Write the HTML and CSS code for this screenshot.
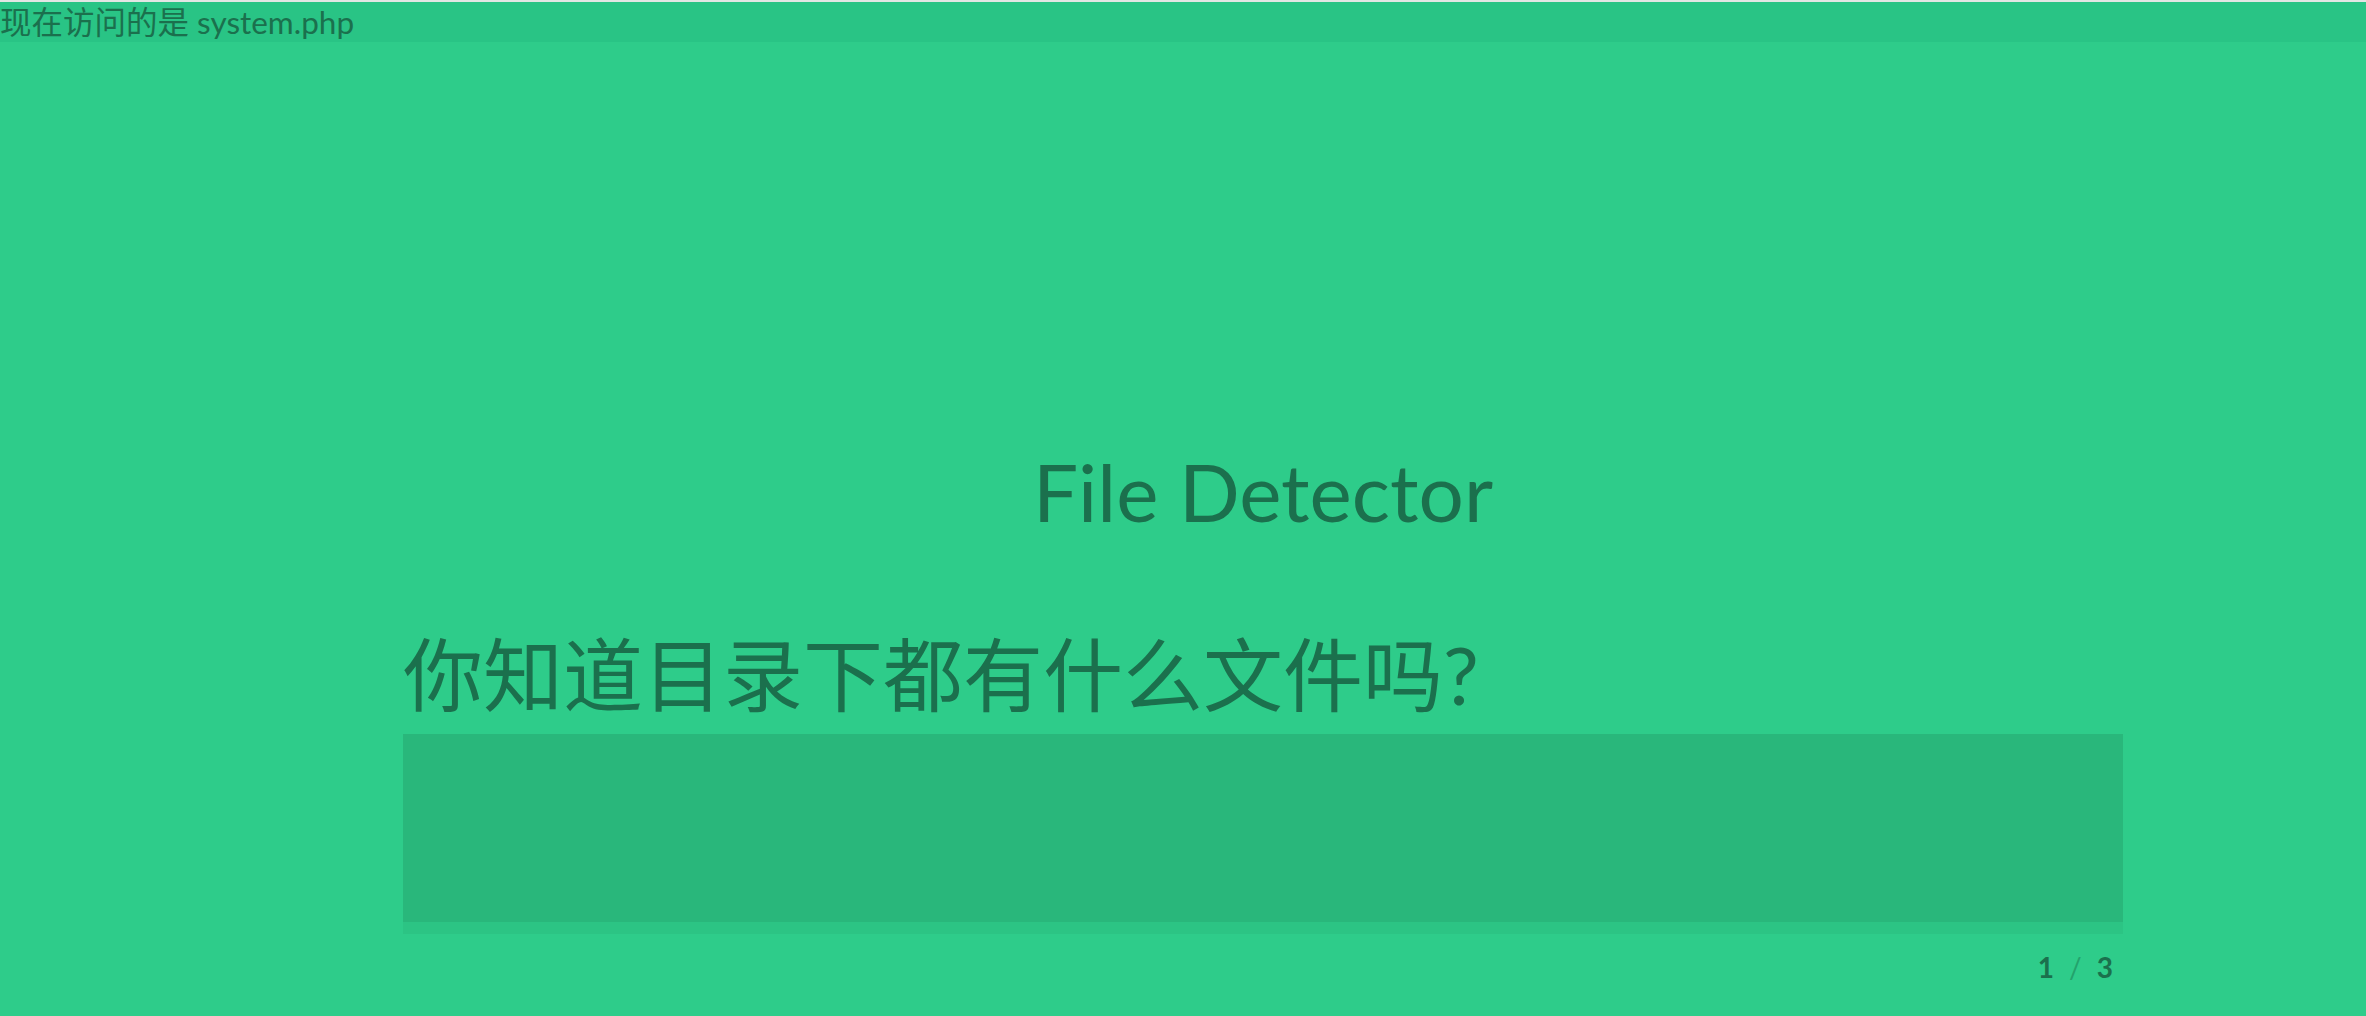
FILE: index.html
```html
<!DOCTYPE html>
<html lang="zh">
<head>
<meta charset="utf-8">
<title>File Detector</title>
<link rel="stylesheet" href="styles.css">
</head>
<body>
<div class="topbar">现在访问的是 system.php</div>
<main class="slide">
  <h1 class="title">File Detector</h1>
  <h2 class="question">你知道目录下都有什么文件吗?</h2>
  <div class="output">
    <div class="output-body"></div>
    <div class="output-strip"></div>
  </div>
  <div class="pager"><span class="num">1</span><span class="sep">/</span><span class="num">3</span></div>
</main>
</body>
</html>
```
FILE: styles.css
```css
html, body {
  margin: 0;
  padding: 0;
}
body {
  background: #2ecc8a;
  color: #1b704d;
  font-family: Lato, "Noto Sans CJK SC", sans-serif;
  height: 1016px;
  overflow: hidden;
}
.topbar {
  border-top: 2px solid #e2e6e4;
  background: #29c485;
  height: 40px;
  line-height: 40px;
  font-size: 31.5px;
  white-space: nowrap;
}
.slide {
  width: 1720px;
  margin-left: 403px;
  display: flex;
  flex-direction: column;
}
.title {
  margin: 401px 0 0 0;
  font-size: 80px;
  font-weight: 400;
  line-height: 96px;
  text-align: center;
}
.question {
  margin: 87px 0 0 0;
  font-size: 80px;
  font-weight: 400;
  line-height: 96px;
  white-space: nowrap;
}
.output {
  margin-top: 12px;
  display: flex;
  flex-direction: column;
}
.output-body {
  height: 188px;
  background: #29b77b;
}
.output-strip {
  height: 12px;
  background: #2cc484;
}
.pager {
  margin-top: 16px;
  padding-right: 10px;
  display: flex;
  justify-content: flex-end;
  gap: 15px;
  font-size: 28px;
  line-height: 34px;
  font-weight: 700;
}
.pager .sep {
  font-weight: 400;
  color: #23a26c;
}
```
